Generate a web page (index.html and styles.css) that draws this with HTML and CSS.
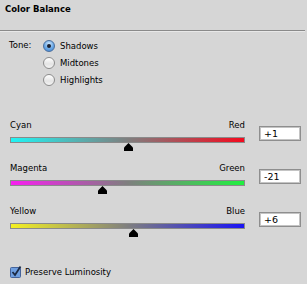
FILE: index.html
```html
<!DOCTYPE html>
<html lang="en">
<head>
    <meta charset="UTF-8">
    <title>Color Balance</title>
    <link rel="stylesheet" href="styles.css">
</head>
<body>
    <div class="panel">
        <div class="header">Color Balance</div>

        <div class="tone">
            <span class="tone-label">Tone:</span>
            <div class="radios">
                <div class="radio-row"><span class="radio checked"></span>Shadows</div>
                <div class="radio-row"><span class="radio"></span>Midtones</div>
                <div class="radio-row"><span class="radio"></span>Highlights</div>
            </div>
        </div>

        <div class="slider">
            <div class="slider-main">
                <div class="slider-labels"><span>Cyan</span><span>Red</span></div>
                <div class="track cyan-red">
                    <svg class="thumb" style="left: 50.5%" width="11" height="8" viewBox="0 0 11 8"><path d="M5.5 0 L10 4.5 V8 H1 V4.5 Z" fill="#000"/></svg>
                </div>
            </div>
            <div class="value">+1</div>
        </div>

        <div class="slider">
            <div class="slider-main">
                <div class="slider-labels"><span>Magenta</span><span>Green</span></div>
                <div class="track magenta-green">
                    <svg class="thumb" style="left: 39.5%" width="11" height="8" viewBox="0 0 11 8"><path d="M5.5 0 L10 4.5 V8 H1 V4.5 Z" fill="#000"/></svg>
                </div>
            </div>
            <div class="value">-21</div>
        </div>

        <div class="slider">
            <div class="slider-main">
                <div class="slider-labels"><span>Yellow</span><span>Blue</span></div>
                <div class="track yellow-blue">
                    <svg class="thumb" style="left: 53%" width="11" height="8" viewBox="0 0 11 8"><path d="M5.5 0 L10 4.5 V8 H1 V4.5 Z" fill="#000"/></svg>
                </div>
            </div>
            <div class="value">+6</div>
        </div>

        <div class="preserve">
            <svg class="checkbox" width="12" height="12" viewBox="0 0 12 12">
                <rect x="0.5" y="1.5" width="10" height="10" rx="1" fill="#6f9fe0" stroke="#45639a"/>
                <path d="M2.5 6 L5 9 L10.5 0.5" fill="none" stroke="#1c2a44" stroke-width="1.8"/>
            </svg>
            Preserve Luminosity
        </div>
    </div>
</body>
</html>
```

FILE: styles.css
```css
body {
    margin: 0;
    background-color: #d6d6d6;
    font-family: "DejaVu Sans", sans-serif;
    font-size: 8.5px;
    color: #000;
}
.panel {
    width: 307px;
    height: 284px;
}
.header {
    height: 31px;
    line-height: 18px;
    padding-left: 5px;
    margin-right: 2px;
    font-weight: bold;
    border-bottom: 1px solid #8a8a8a;
    box-shadow: 0 1px 0 #e8e8e8;
    box-sizing: border-box;
}
.tone {
    display: flex;
    margin-top: 6px;
}
.tone-label {
    width: 34px;
    padding-left: 9px;
    line-height: 17px;
}
.radio-row {
    display: flex;
    align-items: center;
    height: 17px;
}
.radio {
    width: 12px;
    height: 12px;
    border-radius: 50%;
    border: 1px solid #8c8c8c;
    box-sizing: border-box;
    background: linear-gradient(#ffffff, #e4e4e4 60%, #f4f4f4);
    margin-right: 5px;
    position: relative;
}
.radio.checked {
    border-color: #4a6e9c;
    background: radial-gradient(circle at 50% 30%, #cfe6fb, #6aa8e6 55%, #3b7fd0);
}
.radio.checked::after {
    content: "";
    position: absolute;
    left: 3px;
    top: 3px;
    width: 4px;
    height: 4px;
    border-radius: 50%;
    background: #1a2030;
}
.slider {
    display: flex;
    margin-top: 11px;
}
.tone + .slider {
    margin-top: 31px;
}
.slider-main {
    width: 235px;
    margin-left: 10px;
    padding-bottom: 8px;
}
.slider-labels {
    display: flex;
    justify-content: space-between;
    line-height: 12px;
}
.track {
    position: relative;
    height: 6px;
    margin-top: 6px;
    border: 1px solid #8a8a8a;
    box-sizing: border-box;
}
.cyan-red {
    background: linear-gradient(to right, #20f4f4, #7f7f7f 50%, #f40a1e);
}
.magenta-green {
    background: linear-gradient(to right, #f81ef0, #7f7f7f 50%, #20f040);
}
.yellow-blue {
    background: linear-gradient(to right, #f4f020, #7f7f7f 50%, #1a14f4);
}
.thumb {
    position: absolute;
    top: 5px;
    margin-left: -6px;
    display: block;
}
.value {
    width: 42px;
    height: 15px;
    margin-left: 14px;
    margin-top: 7px;
    border: 1px solid #8e8e8e;
    box-shadow: inset 0 0 0 1px #c4c4c4;
    background: #fff;
    box-sizing: border-box;
    padding-left: 4px;
    line-height: 13px;
    font-size: 9.5px;
}
.preserve {
    display: flex;
    align-items: center;
    margin-top: 28px;
    padding-left: 10px;
    line-height: 14px;
}
.checkbox {
    margin-right: 3px;
}
```
